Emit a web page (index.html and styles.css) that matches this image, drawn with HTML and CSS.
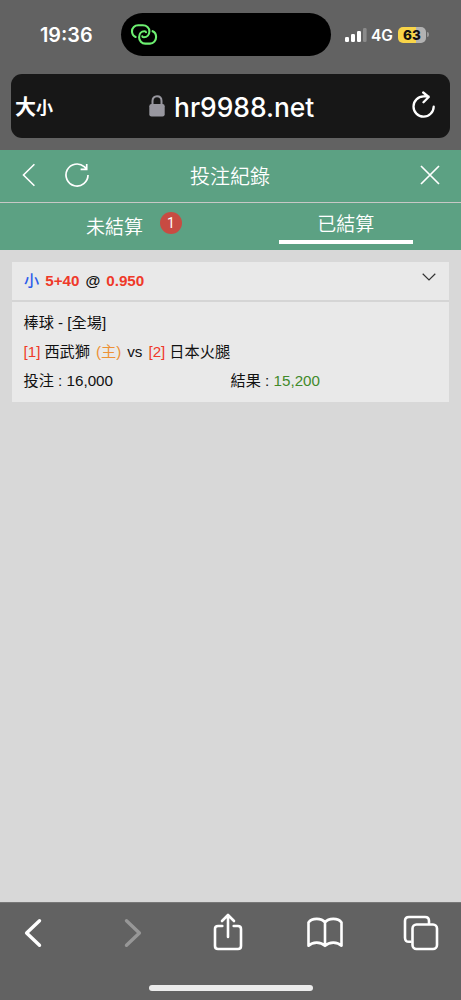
FILE: index.html
```
<!DOCTYPE html>
<html lang="zh-Hant">
<head>
<meta charset="utf-8">
<meta name="viewport" content="width=device-width, initial-scale=1">
<title>投注紀錄</title>
<link rel="stylesheet" href="styles.css">
</head>
<body>
<div class="phone">
  <div class="status">
    <span class="clock">19:36</span>
    <div class="island">
      <svg width="28" height="24" viewBox="0 0 28 24" fill="none" stroke="#6df071" stroke-width="2.100" stroke-linecap="round">
        <path d="M5.600 15C3.400 14 2 11.800 2 9.300C2 5.800 4.700 3.200 8.200 3.200H12.900C16.500 3.200 19.400 5.800 19.400 9.300C19.400 12.700 17 15.300 13.900 15.300C12.900 15.300 12.300 14.900 12.300 14.200"/>
        <path d="M22.600 9.200C24.800 10.200 26.100 12.400 26.100 14.900C26.100 18.500 23.500 21.600 20 21.600H15.300C11.700 21.600 9.100 18.700 9.100 15.200C9.100 11.800 11.300 9.200 14.400 9.200C15.400 9.200 16 9.600 16 10.300"/>
      </svg>
    </div>
    <div class="signals">
      <svg width="22" height="14" viewBox="0 0 22 14"><g fill="#fff"><rect x="0" y="9" width="4" height="5" rx="1.200"/><rect x="6" y="6" width="4" height="8" rx="1.200"/><rect x="12" y="3" width="4" height="11" rx="1.200"/></g><rect x="18" y="0" width="3.600" height="14" rx="1.200" fill="#8b8b8b"/></svg>
      <span class="network">4G</span>
      <span class="battery">63</span>
      <span class="battery-tip"></span>
    </div>
  </div>

  <div class="address">
    <span class="text-size"><b>大</b><b class="small">小</b></span>
    <div class="site">
      <svg width="16" height="22" viewBox="0 0 16 22"><path d="M3.500 10V6C3.500 3 5.300 1.300 8 1.300S12.500 3 12.500 6V10" fill="none" stroke="#98979f" stroke-width="2"/><rect x=".3" y="9" width="15.400" height="12.500" rx="2.200" fill="#98979f"/></svg>
      <span class="host">hr9988.net</span>
    </div>
    <svg class="reload" width="24" height="28" viewBox="0 0 24 28" fill="none" stroke="#fff" stroke-width="2.300" stroke-linecap="round" stroke-linejoin="round"><path d="M21.700 15.700A10.100 10.100 0 1 1 11.600 5.400H16.500M11.200 1.500L16.700 6L11.500 11.200"/></svg>
  </div>

  <header class="header">
    <div class="titlebar">
      <div class="tools">
        <svg width="14" height="24" viewBox="0 0 14 24" fill="none" stroke="#fff" stroke-width="1.600"><path d="M12.400 1.300L1.500 12L12.400 22.700"/></svg>
        <svg width="26" height="26" viewBox="0 0 26 26" fill="none" stroke="#fff" stroke-width="1.700"><path d="M24 13A11 11 0 1 1 20.200 4.700L22.300 6.700M22.700 1.900V7.300H16.600"/></svg>
      </div>
      <h1>投注紀錄</h1>
      <svg width="20" height="20" viewBox="0 0 20 20" fill="none" stroke="#fff" stroke-width="1.700"><path d="M1 1L19 19M19 1L1 19"/></svg>
    </div>
    <nav class="tabs">
      <div class="tab"><span class="label">未結算</span><span class="count">1</span></div>
      <div class="tab active"><span class="label">已結算</span></div>
    </nav>
  </header>

  <main class="list">
    <article class="bet">
      <div class="bet-head">
        <div class="pick"><span class="side">小</span><span class="odds">5+40</span><span>@</span><span class="odds">0.950</span></div>
        <svg width="14" height="8" viewBox="0 0 14 8" fill="none" stroke="#333" stroke-width="1.200"><path d="M.7 .7L7 6.900L13.300 .7"/></svg>
      </div>
      <div class="bet-body">
        <div class="row">棒球 - [全場]</div>
        <div class="row teams"><span class="no">[1]</span><span class="home-team">西武獅</span><span class="host-mark">(主)</span><span class="versus">vs</span><span class="no">[2]</span><span>日本火腿</span></div>
        <div class="row amounts"><span>投注 : 16,000</span><span>結果 : <span class="win">15,200</span></span></div>
      </div>
    </article>
  </main>

  <footer class="browser">
    <div class="actions">
      <svg width="18" height="30" viewBox="0 0 18 30" fill="none" stroke="#fff" stroke-width="3.400" stroke-linecap="round" stroke-linejoin="round"><path d="M15.500 2.700L2.600 15L15.500 27.300"/></svg>
      <svg width="18" height="30" viewBox="0 0 18 30" fill="none" stroke="#979797" stroke-width="3.400" stroke-linecap="round" stroke-linejoin="round"><path d="M2.500 2.700L15.400 15L2.500 27.300"/></svg>
      <svg class="share" width="30" height="38" viewBox="0 0 30 38" fill="none" stroke="#fff" stroke-width="2.600" stroke-linecap="round" stroke-linejoin="round"><path d="M9.300 13H5Q2 13 2 16V33Q2 36 5 36H25Q28 36 28 33V16Q28 13 25 13H20.700M15 24V2.300M9 8L15 2L21 8"/></svg>
      <svg width="36" height="32" viewBox="0 0 36 32" fill="none" stroke="#fff" stroke-width="2.600" stroke-linejoin="round"><path d="M18 5.500C14.500 .7 4.800 .7 1.500 5.500V28.700C5.500 24.800 13.500 24.300 18 28.900C22.500 24.300 30.500 24.800 34.500 28.700V5.500C31.200 .7 21.500 .7 18 5.500V28.900"/></svg>
      <svg width="36" height="36" viewBox="0 0 36 36" fill="none" stroke="#fff" stroke-width="2.600"><path d="M8.600 26.800H6Q2 26.800 2 22.800V6Q2 2 6 2H22Q26 2 26 6V9.500"/><rect x="9.500" y="9.500" width="24.500" height="24.500" rx="4"/></svg>
    </div>
    <div class="home-indicator"></div>
  </footer>
</div>
</body>
</html>
```

FILE: styles.css
```
* { box-sizing: border-box; }
body { margin: 0; background: #626262; font-family: "Liberation Sans", "Noto Sans CJK TC", sans-serif; }
svg { display: block; flex: none; }
.phone { width: 461px; height: 1000px; display: flex; flex-direction: column; background: #626262; overflow: hidden; }

.status { height: 74px; padding: 13px 30px 0 40px; display: flex; align-items: flex-start; font-family: Inter, sans-serif; color: #fff; }
.clock { width: 81px; line-height: 44px; font-size: 19.8px; font-weight: 600; }
.island { width: 210px; height: 43px; padding: 9px; border-radius: 22px; background: #000; }
.signals { height: 43px; margin-left: 14px; display: flex; align-items: center; }
.signals > * { flex: none; }
.network { width: 31px; padding: 1px 0 0 4px; font-size: 15.5px; font-weight: 600; white-space: nowrap; }
.battery { width: 28px; height: 16px; border-radius: 5px; background: linear-gradient(90deg, #f8d448 0 63%, #b2b2b2 63%); color: #111; font-size: 13.5px; line-height: 16px; font-weight: 800; text-align: center; }
.battery-tip { width: 2px; height: 5px; margin-left: 1px; border-radius: 0 2px 2px 0; background: #999; }

.address { height: 64px; margin: 0 11px; padding: 0 14px 0 4px; display: flex; align-items: center; border-radius: 11px; background: #171717; color: #fff; }
.text-size { width: 134px; display: flex; align-items: baseline; font-family: "Noto Sans CJK TC", sans-serif; font-size: 21px; line-height: 30px; }
.text-size .small { font-size: 17px; }
.site { display: flex; align-items: center; gap: 9px; }
.host { padding-top: 2px; font: 500 26.4px/40px Inter, sans-serif; }
.reload { margin: -2px 0 0 auto; }

.header { margin-top: 12px; height: 100px; background: #5ca183; color: #fff; }
.titlebar { height: 53px; padding: 0 21px 2px 22px; display: flex; align-items: center; border-bottom: 1px solid #c7c8c6; }
.tools { width: 168px; display: flex; align-items: center; gap: 28px; }
h1 { flex: 1; margin: 0; padding-top: 2px; font: 350 20px/28px "Noto Sans CJK TC", sans-serif; }
.tabs { height: 47px; display: grid; grid-template-columns: 1fr 1fr; }
.tab { display: flex; font: 350 19px/28px "Noto Sans CJK TC", sans-serif; }
.tab:first-child { padding: 9px 0 0 86px; gap: 17px; }
.count { width: 22px; height: 22px; border-radius: 50%; background: #c84b42; font: 14px/22px Roboto, sans-serif; text-align: center; }
.active { flex-direction: column; align-items: center; padding-top: 6px; }
.active::after { content: ""; width: 134px; height: 4px; margin-top: 3px; background: #fff; }

.list { flex: 1; padding: 12px; background: #d8d8d8; color: #111; font-size: 15.2px; }
.bet { height: 140px; background: #e9e9e9; }
.bet-head { height: 40px; padding: 0 13px 0 12px; display: flex; justify-content: space-between; border-bottom: 2px solid #d5d5d5; }
.bet-head svg { margin-top: 11px; }
.pick { display: flex; gap: 6px; line-height: 38px; font-weight: 700; }
.side { color: #2b5bea; font-weight: 500; }
.odds { color: #ef3929; }
.bet-body { padding: 6px 11.5px; }
.row { height: 29px; line-height: 29px; white-space: nowrap; }
.teams { display: flex; }
.no { color: #ef3929; margin-right: 4px; }
.host-mark { margin: 0 6px; color: #ed9135; }
.versus { margin-right: 6px; }
.amounts { display: grid; grid-template-columns: 207px 1fr; }
.win { color: #418a2b; }

.browser { height: 98px; border-top: 1px solid #777; background: #626262; }
.actions { height: 82px; padding: 0 22px 22px 24px; display: grid; grid-template-columns: 100px 89px 93.5px 96.5px 36px; align-items: center; }
.share { margin-bottom: 3px; }
.home-indicator { width: 164px; height: 6px; margin: 0 auto; border-radius: 3px; background: #ececec; }
```
